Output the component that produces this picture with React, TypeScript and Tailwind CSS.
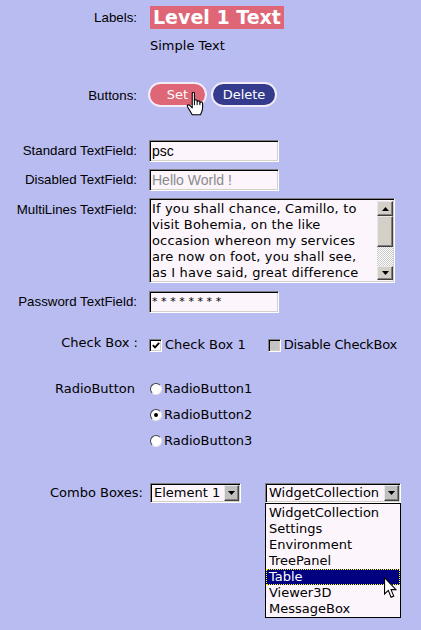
import React from "react";

const dv = "font-['DejaVu_Sans',Verdana,sans-serif]";
const ar = "font-['Liberation_Sans',Arial,sans-serif]";
const sunken =
  "border border-t-[#808080] border-l-[#808080] border-r-white border-b-white shadow-[inset_1px_1px_0_#000,inset_-1px_-1px_0_#d4d0c8]";
const raised =
  "border border-t-[#e8e8e8] border-l-[#e8e8e8] border-r-[#404040] border-b-[#404040] shadow-[inset_-1px_-1px_0_#808080] bg-[#d4d0c8]";

function Label({ children, cls = "" }: { children: React.ReactNode; cls?: string }) {
  return (
    <div className={`w-[137px] shrink-0 text-right text-[13.3px] leading-[16px] text-black ${ar} ${cls}`}>
      {children}
    </div>
  );
}

function Tri({ up }: { up?: boolean }) {
  return (
    <svg width="7" height="4" viewBox="0 0 7 4">
      {up ? <path d="M0 4 L3.5 0 L7 4 Z" fill="#000" /> : <path d="M0 0 L7 0 L3.5 4 Z" fill="#000" />}
    </svg>
  );
}

function Combo({ w, text, children }: { w: string; text: string; children?: React.ReactNode }) {
  return (
    <div className={`relative ${w} h-[20px] bg-[#fcf5fc] ${sunken} flex items-center`}>
      <span className={`flex-1 pl-[3px] text-[13px] leading-[16px] text-black whitespace-nowrap overflow-hidden ${dv}`}>
        {text}
      </span>
      <div className={`w-[15px] h-[16px] mr-[1px] ${raised} bg-[repeating-conic-gradient(#c8c8c8_0_25%,#b8b8b8_0_50%)] bg-[length:2px_2px] flex items-center justify-center`}>
        <Tri />
      </div>
      {children}
    </div>
  );
}

function Radio({ on, text }: { on?: boolean; text: string }) {
  return (
    <div className="flex items-center h-[16px]">
      <div className="ml-[1px] w-[12px] h-[12px] rounded-full bg-white border border-t-[#404040] border-l-[#404040] border-r-[#e8e8e8] border-b-[#e8e8e8] flex items-center justify-center">
        {on && <div className="w-[4px] h-[4px] rounded-full bg-black" />}
      </div>
      <span className={`ml-[2px] text-[13px] leading-[16px] text-black ${dv}`}>{text}</span>
    </div>
  );
}

export default function App() {
  const items = ["WidgetCollection", "Settings", "Environment", "TreePanel", "Table", "Viewer3D", "MessageBox"];
  return (
    <div className="w-[421px] h-[630px] bg-[#b9bcf1] overflow-hidden pt-[6px]">
      {/* Labels */}
      <div className="flex items-center h-[23px]">
        <Label cls="pt-[1px]">Labels:</Label>
        <div className={`ml-[13px] h-[23px] bg-[#de6677] px-[3px] text-white font-bold text-[19px] leading-[23px] ${dv}`}>
          Level 1 Text
        </div>
      </div>
      <div className="flex items-center h-[16px] mt-[9px]">
        <div className="w-[150px]" />
        <span className={`text-[13px] leading-[16px] text-black ${dv}`}>Simple Text</span>
      </div>

      {/* Buttons */}
      <div className="flex items-center h-[25px] mt-[28px]">
        <Label cls="pt-[3px]">Buttons:</Label>
        <div className="relative ml-[11px] flex gap-[4px]">
          <div className={`w-[59px] h-[25px] rounded-full border-2 border-[#f3ecf6] bg-[#de6677] flex items-center justify-center text-white text-[13px] ${dv}`}>
            Set
          </div>
          <div className={`w-[66px] h-[25px] rounded-full border-2 border-[#f3ecf6] bg-[#343b8c] flex items-center justify-center text-white text-[13px] ${dv}`}>
            Delete
          </div>
          <svg className="absolute left-[38px] top-[10px]" width="19" height="24" viewBox="0 0 17 22">
            <path
              d="M5.5 1.2 C5.5 0 7.5 0 7.5 1.2 V8 C7.5 6.8 10 6.8 10 8 V9 C10 7.8 12.5 7.8 12.5 9 V10 C12.5 8.8 15 8.8 15 10 V15 C15 17 14 18.8 13 20.8 H5.5 L1.2 13.5 C0.5 12.2 2.2 11.2 3.2 12.2 L5.5 14.5 Z"
              fill="#fff"
              stroke="#000"
              strokeWidth="1"
              strokeLinejoin="round"
            />
            <path d="M7.5 8 V12 M10 9 V12 M12.5 10 V12" stroke="#000" strokeWidth="0.9" />
          </svg>
        </div>
      </div>

      {/* Text fields */}
      <div className="flex items-center h-[22px] mt-[33px]">
        <Label>Standard TextField:</Label>
        <div className={`ml-[12px] w-[130px] h-[22px] bg-[#fcf5fc] ${sunken} flex items-center pl-[2px] text-[14px] text-black ${ar}`}>
          psc
        </div>
      </div>
      <div className="flex items-center h-[22px] mt-[7px]">
        <Label>Disabled TextField:</Label>
        <div className={`ml-[12px] w-[130px] h-[22px] bg-[#fcf5fc] ${sunken} flex items-center pl-[2px] text-[14px] text-[#8a8a8a] ${ar}`}>
          Hello World !
        </div>
      </div>
      <div className="flex items-start h-[85px] mt-[7px]">
        <Label cls="pt-[4px]">MultiLines TextField:</Label>
        <div className={`ml-[12px] w-[246px] h-[85px] bg-[#fcf5fc] ${sunken} flex`}>
          <div className={`flex-1 pl-[2px] pt-[2px] text-[13px] leading-[16px] tracking-[0.15px] text-black whitespace-nowrap overflow-hidden ${dv}`}>
            <div>If you shall chance, Camillo, to</div>
            <div>visit Bohemia, on the like</div>
            <div>occasion whereon my services</div>
            <div>are now on foot, you shall see,</div>
            <div>as I have said, great difference</div>
          </div>
          <div className="w-[16px] mt-[2px] mb-[2px] mr-[1px] flex flex-col">
            <div className={`h-[15px] ${raised} flex items-center justify-center`}>
              <Tri up />
            </div>
            <div className={`h-[31px] ${raised}`} />
            <div className="flex-1 bg-[repeating-conic-gradient(#ffffff_0_25%,#c8c8c8_0_50%)] bg-[length:2px_2px]" />
            <div className={`h-[14px] ${raised} flex items-center justify-center`}>
              <Tri />
            </div>
          </div>
        </div>
      </div>
      <div className="flex items-center h-[22px] mt-[8px]">
        <Label>Password TextField:</Label>
        <div className={`ml-[12px] w-[130px] h-[22px] bg-[#fcf5fc] ${sunken} flex items-center pl-[2px] text-[11px] tracking-[3.6px] text-black ${dv}`}>
          ********
        </div>
      </div>

      {/* Check boxes */}
      <div className="flex items-center h-[16px] mt-[24px]">
        <div className={`w-[138px] shrink-0 text-right text-[13px] leading-[16px] text-black pb-[5px] ${dv}`}>Check Box :</div>
        <div className="ml-[11px] flex items-center">
          <div className={`w-[13px] h-[13px] bg-white ${sunken} flex items-center justify-center`}>
            <svg width="8" height="7" viewBox="0 0 8 7">
              <path d="M0.8 3.2 L3 5.4 L7.2 0.8" stroke="#000" strokeWidth="1.8" fill="none" />
            </svg>
          </div>
          <span className={`ml-[3px] text-[13px] leading-[16px] text-black ${dv}`}>Check Box 1</span>
          <div className={`ml-[22px] w-[13px] h-[13px] bg-[#c4c4c4] ${sunken}`} />
          <span className={`ml-[3px] text-[13px] leading-[16px] tracking-[-0.2px] text-black ${dv}`}>Disable CheckBox</span>
        </div>
      </div>

      {/* Radio buttons */}
      <div className="flex items-start mt-[28px]">
        <div className={`w-[135px] shrink-0 text-right text-[13px] leading-[16px] text-black pb-[2px] ${dv}`}>RadioButton</div>
        <div className="ml-[14px] flex flex-col gap-[10px]">
          <Radio text="RadioButton1" />
          <Radio on text="RadioButton2" />
          <Radio text="RadioButton3" />
        </div>
      </div>

      {/* Combo boxes */}
      <div className="flex items-center h-[20px] mt-[34px]">
        <div className={`w-[143px] shrink-0 text-right text-[13px] leading-[16px] text-black ${dv}`}>Combo Boxes:</div>
        <div className="ml-[7px] flex items-center gap-[24px]">
          <Combo w="w-[91px]" text="Element 1" />
          <Combo w="w-[136px]" text="WidgetCollection">
            <div className="absolute left-[-1px] top-[19px] w-[136px] border border-black bg-[#fcf5fc] pt-[1px]">
              {items.map((it) => (
                <div
                  key={it}
                  className={`h-[16px] pl-[2px] border text-[13px] leading-[14px] whitespace-nowrap ${dv} ${
                    it === "Table"
                      ? "bg-[#000080] text-white border-dotted border-[#ffff00]"
                      : "border-transparent text-black"
                  }`}
                >
                  {it}
                </div>
              ))}
              <svg className="absolute left-[118px] top-[73px]" width="13" height="22" viewBox="0 0 12 20">
                <path d="M0.5 0.5 L0.5 15.5 L4 12.2 L6.5 18.5 L9 17.5 L6.5 11.5 L11 11.5 Z" fill="#fff" stroke="#000" strokeWidth="1" strokeLinejoin="miter" />
              </svg>
            </div>
          </Combo>
        </div>
      </div>
    </div>
  );
}
